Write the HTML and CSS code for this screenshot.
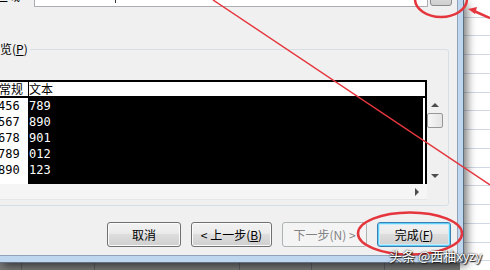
FILE: index.html
```html
<!DOCTYPE html>
<html>
<head>
	<meta charset="utf-8">
	<title>文本导入向导 - 预览</title>
	<link rel="stylesheet" href="styles.css">
</head>
<body>

<div class="window">
	<div class="client">

		<div class="range-row">
			<span class="range-label">数据区域</span>
			<div class="range-input"><span class="caret"></span></div>
			<div class="collapse-btn"></div>
		</div>

		<fieldset class="group">
			<legend>预览(<u>P</u>)</legend>
			<div class="preview">
				<div class="sheet">
					<div class="sheet-head"><span class="c1">常规</span><span class="c2">文本</span></div>
					<div class="sheet-row"><span class="c1">456</span><span class="c2">789</span></div>
					<div class="sheet-row"><span class="c1">567</span><span class="c2">890</span></div>
					<div class="sheet-row"><span class="c1">678</span><span class="c2">901</span></div>
					<div class="sheet-row"><span class="c1">789</span><span class="c2">012</span></div>
					<div class="sheet-row"><span class="c1">890</span><span class="c2">123</span></div>
					<div class="sheet-row"><span class="c1"></span><span class="c2"></span></div>
				</div>
				<div class="vscroll">
					<div class="sb-btn"><span class="arrow-up"></span></div>
					<div class="sb-thumb"></div>
					<div class="sb-track"></div>
					<div class="sb-btn"><span class="arrow-down"></span></div>
				</div>
				<div class="hscroll"><span class="arrow-right"></span></div>
			</div>
		</fieldset>

		<div class="buttons">
			<div class="btn btn-cancel">取消</div>
			<div class="btn btn-back">&lt; 上一步(<u>B</u>)</div>
			<div class="btn btn-next disabled">下一步(N) &gt;</div>
			<div class="btn btn-finish default">完成(<u>F</u>)</div>
		</div>

	</div>
</div>

<!-- red marks drawn over the screenshot -->
<svg class="marks" width="490" height="270" viewBox="0 0 490 270">
	<line x1="213" y1="0" x2="490" y2="185" stroke="#e4363c" stroke-width="1.5"/>
	<ellipse cx="441" cy="-1" rx="26" ry="18" fill="none" stroke="#e4363c" stroke-width="2.5"/>
	<line x1="490" y1="18" x2="474" y2="11" stroke="#e4363c" stroke-width="2.5"/>
	<polygon points="468,9 477,7 475,14" fill="#e4363c"/>
	<ellipse cx="410" cy="233.5" rx="52" ry="21" fill="none" stroke="#e4363c" stroke-width="2.5"/>
</svg>

<div class="watermark">头条 @西柚xyzy</div>

</body>
</html>
```

FILE: styles.css
```css
* {
	box-sizing: border-box;
}

html, body {
	margin: 0;
}

/* Spreadsheet behind the dialog */
body {
	width: 490px;
	height: 270px;
	overflow: hidden;
	position: relative;
	font-family: "Noto Sans CJK SC", "Noto Sans", sans-serif;
	font-size: 12px;
	color: #000;
	background-color: #fff;
	background-image:
		repeating-linear-gradient(to bottom, transparent 0 17.75px, #d0d7e5 17.75px 18.75px),
		repeating-linear-gradient(to right, transparent 0 71.5px, #c3cad6 71.5px 72.5px);
	background-position: 0 -1px, -50px 0;
}

/* Dialog frame (Win7 style) */
.window {
	width: 464px;
	height: 263px;
	border-right: 1px solid #5d6f83;
	border-bottom: 1px solid #5d6f83;
	padding: 0 5px 6px 0;
	background: #bfd6ef;
	box-shadow: -4px 9px 0 rgba(0, 0, 0, 0.52), 3px 3px 9px rgba(0, 0, 0, 0.55);
}

.client {
	height: 100%;
	border-right: 1px solid #8fa2b7;
	border-bottom: 1px solid #8fa2b7;
	background: #f0f0f0;
	display: flex;
	flex-direction: column;
	overflow: hidden;
}

/* Range row, mostly scrolled off the top */
.range-row {
	display: flex;
	align-items: flex-start;
	height: 23px;
	margin-top: -16px;
	padding-right: 5px;
	flex-shrink: 0;
}

.range-label {
	width: 34px;
	height: 23px;
	line-height: 24px;
	overflow: hidden;
	white-space: nowrap;
	text-indent: -28px;
}

.range-input {
	flex: 1;
	height: 23px;
	border: 1px solid #abadb3;
	background: #fff;
	padding-left: 80px;
}

.caret {
	display: block;
	width: 1px;
	height: 18px;
	background: #333;
}

.collapse-btn {
	width: 22px;
	height: 22px;
	margin-left: 2px;
	border: 1px solid #8a8a8a;
	border-radius: 3px;
	background: linear-gradient(#f2f2f2, #ebebeb 45%, #dddddd 50%, #cfcfcf);
}

/* Preview group box */
.group {
	margin: 35px 0 0 -22px;
	width: 471px;
	min-width: 0;
	padding: 24px 3px 5px 7px;
	border: 1px solid #d5dfe5;
	border-radius: 3px;
	flex-shrink: 0;
}

.group legend {
	padding: 0 2px;
	line-height: 14px;
	font-size: 12px;
}

.preview {
	display: grid;
	grid-template-columns: 441px 18px;
	grid-template-rows: 104px 16px;
}

.sheet {
	grid-column: 1;
	grid-row: 1;
	border-top: 2px solid #000;
	border-right: 2px solid #000;
	background: #fff;
	overflow: hidden;
}

.sheet-head {
	display: flex;
	height: 16px;
	line-height: 14px;
	border-bottom: 2px solid #000;
}

.sheet-head .c1 {
	width: 43px;
	padding-left: 13px;
	border-right: 1px solid #000;
}

.sheet-row {
	display: flex;
	height: 16px;
	line-height: 16px;
	font-family: "DejaVu Sans Mono", monospace;
	font-size: 12px;
}

.sheet-row .c1 {
	width: 42px;
	padding-left: 12px;
	white-space: nowrap;
}

.sheet-row .c2 {
	flex: 1;
	margin-right: 2px;
	padding-left: 1px;
	background: #000;
	color: #fff;
}

/* Scroll bars */
.vscroll {
	grid-column: 2;
	grid-row: 1;
	margin-top: 17px;
	display: flex;
	flex-direction: column;
}

.sb-btn {
	height: 16px;
	display: flex;
	align-items: center;
	justify-content: center;
	padding-right: 2px;
}

.sb-thumb {
	height: 15px;
	margin-right: 2px;
	border: 1px solid #979797;
	border-radius: 2px;
	background: linear-gradient(to right, #f6f6f6, #e4e4e4);
}

.sb-track {
	flex: 1;
}

.arrow-up {
	border-left: 4px solid transparent;
	border-right: 4px solid transparent;
	border-bottom: 4px solid #4d4d4d;
}

.arrow-down {
	border-left: 4px solid transparent;
	border-right: 4px solid transparent;
	border-top: 4px solid #4d4d4d;
}

.hscroll {
	grid-column: 1;
	grid-row: 2;
	display: flex;
	align-items: center;
	justify-content: flex-end;
	padding-right: 8px;
	background: #f5f5f5;
	border-bottom: 1px solid #e6e6e6;
}

.arrow-right {
	border-top: 4px solid transparent;
	border-bottom: 4px solid transparent;
	border-left: 4px solid #4d4d4d;
}

/* Wizard buttons */
.buttons {
	display: flex;
	justify-content: flex-end;
	gap: 10px;
	margin-top: 16px;
	padding-right: 6px;
}

.btn {
	height: 25px;
	display: flex;
	align-items: center;
	justify-content: center;
	border: 1px solid #707070;
	border-radius: 3px;
	background: linear-gradient(#f2f2f2, #ebebeb 45%, #dddddd 50%, #cfcfcf);
	box-shadow: inset 0 0 0 1px #fbfbfb;
	white-space: nowrap;
}

.btn-cancel { width: 74px; }
.btn-back { width: 81px; }
.btn-next { width: 85px; }
.btn-finish { width: 74px; }

.btn.disabled {
	border-color: #adb2b5;
	background: #f4f4f4;
	color: #838383;
	box-shadow: none;
}

.btn.default {
	border-color: #3c7fb1;
	box-shadow: inset 0 0 0 1px #5fd0f9, inset 0 0 0 2px #c4ecfc;
}

/* Annotation overlay */
.marks {
	position: absolute;
	left: 0;
	top: 0;
	pointer-events: none;
}

.watermark {
	position: absolute;
	right: 8px;
	bottom: 6px;
	font-size: 13px;
	line-height: 16px;
	color: #fff;
	text-shadow: 0 0 2px #000, 1px 1px 1px #222;
}
```
